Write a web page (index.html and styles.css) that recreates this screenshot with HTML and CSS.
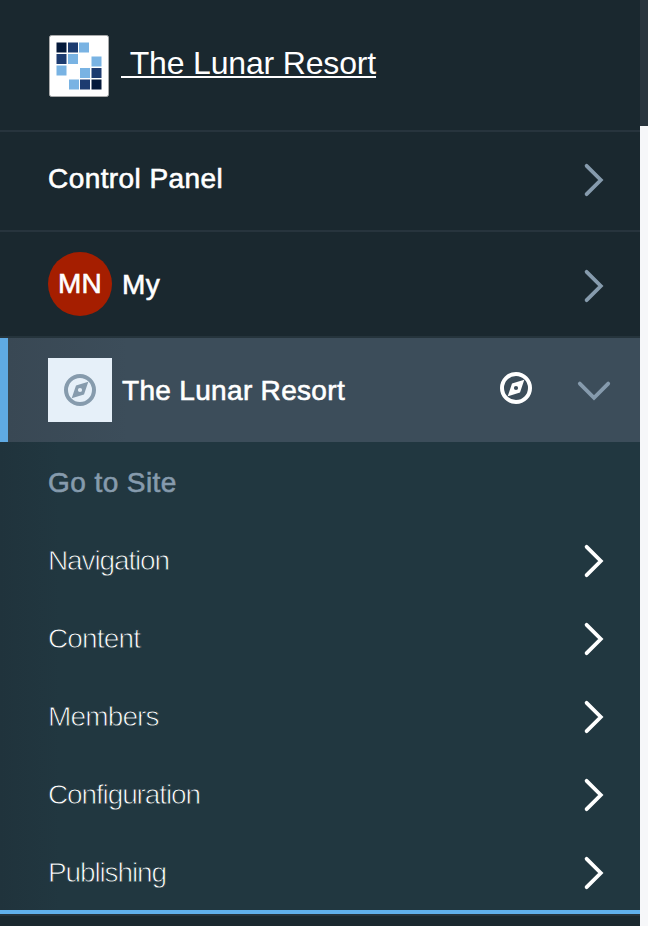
FILE: index.html
```
<!DOCTYPE html>
<html lang="en">
<head>
<meta charset="utf-8">
<title>The Lunar Resort</title>
<link rel="stylesheet" href="styles.css">
</head>
<body>
<svg width="0" height="0" class="defs">
  <symbol id="right" viewBox="0 0 32 36"><path d="M8.6 3.8 22.8 18 8.6 32.2"/></symbol>
  <symbol id="down" viewBox="0 0 36 32"><path d="M3.8 8.6 18 22.8 32.2 8.6"/></symbol>
  <symbol id="compass" viewBox="0 0 32 32">
    <circle cx="16" cy="16" r="14" fill="none" stroke="currentColor" stroke-width="4"/>
    <path fill="currentColor" fill-rule="evenodd" d="M24.3 7.7 12 11.6 7.7 24.3 20 20.4ZM16 13.9a2.1 2.1 0 1 1 0 4.2a2.1 2.1 0 1 1 0-4.2Z"/>
  </symbol>
</svg>
<div class="page">
  <nav class="menu">
    <header class="brand">
      <svg class="logo" width="60" height="62" viewBox="0 0 60 62">
        <rect x=".5" y=".5" width="59" height="61" rx="2" fill="#fff" stroke="#a9aaab"/>
        <path fill="#04193a" d="M7.5 7.5h10v10h-10zM42.5 44.5h10v10h-10z"/>
        <path fill="#1c3b70" d="M19 7.5h10v10H19zM7.5 19h10v10h-10zM42.5 33h10v10h-10zM31 44.5h10v10H31z"/>
        <path fill="#79b3e3" d="M30 7.5h10v10H30zM19 19h10v10H19zM7.5 30.5h10v10h-10zM42.5 21.5h10v10h-10zM31 33h10v10H31zM20 44.5h10v10H20z"/>
      </svg>
      <a class="brand-name">&nbsp;The Lunar Resort</a>
    </header>
    <div class="row control"><span class="label l-control">Control Panel</span><svg class="chev muted" width="32" height="36"><use href="#right"/></svg></div>
    <div class="row my"><span class="avatar">MN</span><span class="label">My</span><svg class="chev muted" width="32" height="36"><use href="#right"/></svg></div>
    <div class="row site"><span class="tile"><svg width="32" height="32"><use href="#compass"/></svg></span><span class="label l-site">The Lunar Resort</span><svg class="go" width="32" height="32"><use href="#compass"/></svg><svg class="chev down muted" width="36" height="32"><use href="#down"/></svg></div>
    <div class="sub">
      <div class="item"><span class="label goto">Go to Site</span></div>
      <div class="item"><span class="thin tight">Navigation</span><svg class="chev" width="32" height="36"><use href="#right"/></svg></div>
      <div class="item"><span class="thin">Content</span><svg class="chev" width="32" height="36"><use href="#right"/></svg></div>
      <div class="item"><span class="thin">Members</span><svg class="chev" width="32" height="36"><use href="#right"/></svg></div>
      <div class="item"><span class="thin tight">Configuration</span><svg class="chev" width="32" height="36"><use href="#right"/></svg></div>
      <div class="item"><span class="thin tight">Publishing</span><svg class="chev" width="32" height="36"><use href="#right"/></svg></div>
    </div>
    <div class="end"></div>
  </nav>
  <aside class="edge"></aside>
</div>
</body>
</html>
```
FILE: styles.css
```
* { box-sizing: border-box; }
body { margin: 0; font-family: "Liberation Sans", Arial, sans-serif; color: #fff; background: #1a272e; }
svg { display: block; flex: none; }
.defs { position: absolute; }
.page { display: flex; width: 648px; height: 926px; overflow: hidden; }
.menu { width: 640px; background: #1a282f; }
.edge { flex: 1; background: #f6f7f9; border-top: 126px solid #29353e; }
.brand { display: flex; height: 132px; padding: 35px 0 0 49px; border-bottom: 2px solid #27343d; }
.brand-name { margin: 10px 0 0 12px; height: 40px; font-size: 32px; line-height: 37px; letter-spacing: -.17px; white-space: nowrap; text-decoration: underline; text-decoration-thickness: 2px; text-underline-offset: 2px; text-decoration-skip-ink: none; }
.row, .item { display: flex; align-items: center; padding-left: 48px; padding-right: 30px; }
.control { height: 100px; border-bottom: 2px solid #27343d; }
.control .chev { margin-top: -2px; }
.my { height: 106px; border-bottom: 2px solid #25343c; }
.my .chev { margin-top: 4px; }
.site { height: 104px; padding-left: 40px; border-left: 8px solid #5faae3; background: linear-gradient(90deg, #394854, #3c4d5a 120px); }
.label { font-size: 28px; line-height: 32px; letter-spacing: .43px; -webkit-text-stroke: .6px currentColor; white-space: nowrap; margin-top: -4px; }
.avatar + .label, .tile + .label { margin: 1px 0 0 10px; }
.tile + .label { letter-spacing: .32px; margin-top: 2px; }
.avatar { display: grid; place-items: center; width: 64px; height: 64px; border-radius: 50%; background: #a51e00; font-size: 28px; letter-spacing: .3px; -webkit-text-stroke: .6px #fff; }
.tile { display: grid; place-items: center; width: 64px; height: 64px; background: #e6f0f9; color: #869bad; }
.chev { margin-left: auto; fill: none; stroke: #fff; stroke-width: 3.8; stroke-linecap: round; stroke-linejoin: miter; }
.muted { stroke: #869bad; }
.go { margin: -4px 0 0 auto; }
.site .down { margin: 2px -2px 0 44px; }
.sub { background: linear-gradient(90deg, #20333c, #213740 60px); }
.item { height: 78px; }
.item .chev, .thin { margin-top: 4px; }
.goto { color: #869bad; margin-top: 4px; }
.thin { font-size: 28px; line-height: 32px; letter-spacing: -.85px; white-space: nowrap; -webkit-text-stroke: .8px #213740; }
.tight { letter-spacing: -1.13px; }
.end { height: 6px; background: #61b0ec; border-bottom: 2px solid #27343d; }
```
